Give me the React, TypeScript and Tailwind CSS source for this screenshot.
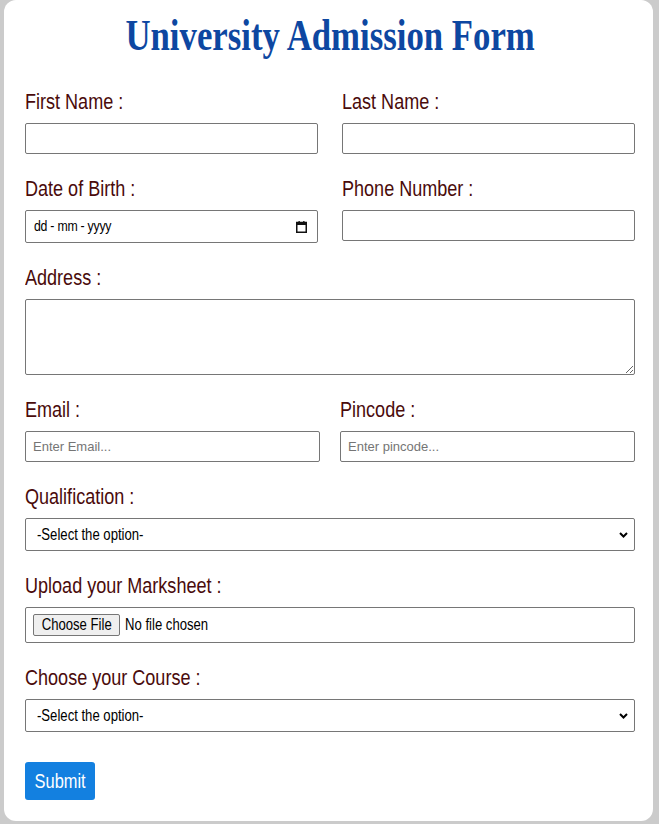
import React from "react";

const sans = { fontFamily: '"Liberation Sans", Arial, sans-serif' };

function N({ children, center = false }: { children: React.ReactNode; center?: boolean }) {
  return (
    <span className={center ? "inline-block whitespace-nowrap origin-center scale-x-[0.82]" : "inline-block whitespace-nowrap origin-left scale-x-[0.82]"}>
      {children}
    </span>
  );
}

function Label({ children }: { children: React.ReactNode }) {
  return (
    <div className="text-[22px] leading-[22px] text-[#4a0b0b] mb-[10px]" style={sans}>
      <N>{children}</N>
    </div>
  );
}

function TextInput({ placeholder = "" }: { placeholder?: string }) {
  return (
    <input
      type="text"
      placeholder={placeholder}
      className="block w-full h-[31px] border border-[#767676] rounded-[2px] px-[7px] text-[13px] text-black placeholder:text-[#757575] bg-white outline-none"
      style={sans}
    />
  );
}

function SelectBox() {
  return (
    <div
      className="relative h-[33px] border border-[#767676] rounded-[2px] pl-[11px] flex items-center text-[16px] text-black bg-white"
      style={sans}
    >
      <N>-Select the option-</N>
      <svg width="9" height="6" viewBox="0 0 9 6" className="absolute right-[6px] top-[13px]">
        <path d="M1 1 L4.5 4.5 L8 1" fill="none" stroke="#000" strokeWidth="2" />
      </svg>
    </div>
  );
}

export default function App() {
  return (
    <div className="min-h-[824px] bg-[#cbcbcb] pl-[4px] pr-[6px]">
      <div className="bg-white rounded-[12px] pl-[21px] pr-[18px] pt-[12px] pb-[21px]">
        <h1
          className="h-[48px] text-center text-[44px] leading-[48px] font-bold text-[#0d47a1] whitespace-nowrap"
          style={{ fontFamily: '"Liberation Serif", "Times New Roman", serif' }}
        >
          <span className="inline-block scale-x-[0.79]">University Admission Form</span>
        </h1>

        <div className="mt-[31px] grid grid-cols-2 gap-x-[24px]">
          <div>
            <Label>First Name :</Label>
            <TextInput />
          </div>
          <div>
            <Label>Last Name :</Label>
            <TextInput />
          </div>
        </div>

        <div className="mt-[24px] grid grid-cols-2 gap-x-[24px] items-start">
          <div>
            <Label>Date of Birth :</Label>
            <div className="h-[33px] border border-[#767676] rounded-[2px] flex items-center pl-[8px] pr-[10px] bg-white">
              <span className="text-[15px] text-black tracking-[-0.3px]" style={sans}>
                <N>dd - mm - yyyy</N>
              </span>
              <svg width="11" height="12" viewBox="0 0 11 12" className="ml-auto">
                <rect x="0.75" y="1.5" width="9.5" height="9.75" fill="none" stroke="#111" strokeWidth="1.5" />
                <rect x="0.75" y="1.5" width="9.5" height="2.5" fill="#111" />
                <rect x="2.5" y="0" width="1.3" height="2" fill="#111" />
                <rect x="7.2" y="0" width="1.3" height="2" fill="#111" />
              </svg>
            </div>
          </div>
          <div>
            <Label>Phone Number :</Label>
            <TextInput />
          </div>
        </div>

        <div className="mt-[24px]">
          <Label>Address :</Label>
          <textarea className="block w-full h-[76px] border border-[#767676] rounded-[2px] bg-white outline-none resize-y" />
        </div>

        <div className="mt-[24px] grid grid-cols-2 gap-x-[20px]">
          <div>
            <Label>Email :</Label>
            <TextInput placeholder="Enter Email..." />
          </div>
          <div>
            <Label>Pincode :</Label>
            <TextInput placeholder="Enter pincode..." />
          </div>
        </div>

        <div className="mt-[24px]">
          <Label>Qualification :</Label>
          <SelectBox />
        </div>

        <div className="mt-[24px]">
          <Label>Upload your Marksheet :</Label>
          <div className="h-[36px] border border-[#767676] rounded-[2px] flex items-center pl-[7px] bg-white text-[16px] text-black" style={sans}>
            <span className="h-[22px] w-[87px] flex items-center justify-center bg-[#efefef] border border-[#767676] rounded-[2px]">
              <N center>Choose File</N>
            </span>
            <span className="ml-[5px]">
              <N>No file chosen</N>
            </span>
          </div>
        </div>

        <div className="mt-[24px]">
          <Label>Choose your Course :</Label>
          <SelectBox />
        </div>

        <button
          className="mt-[30px] h-[38px] w-[70px] bg-[#1380e0] text-white text-[20px] rounded-[3px] flex items-center justify-center"
          style={sans}
        >
          <N center>Submit</N>
        </button>
      </div>
    </div>
  );
}
